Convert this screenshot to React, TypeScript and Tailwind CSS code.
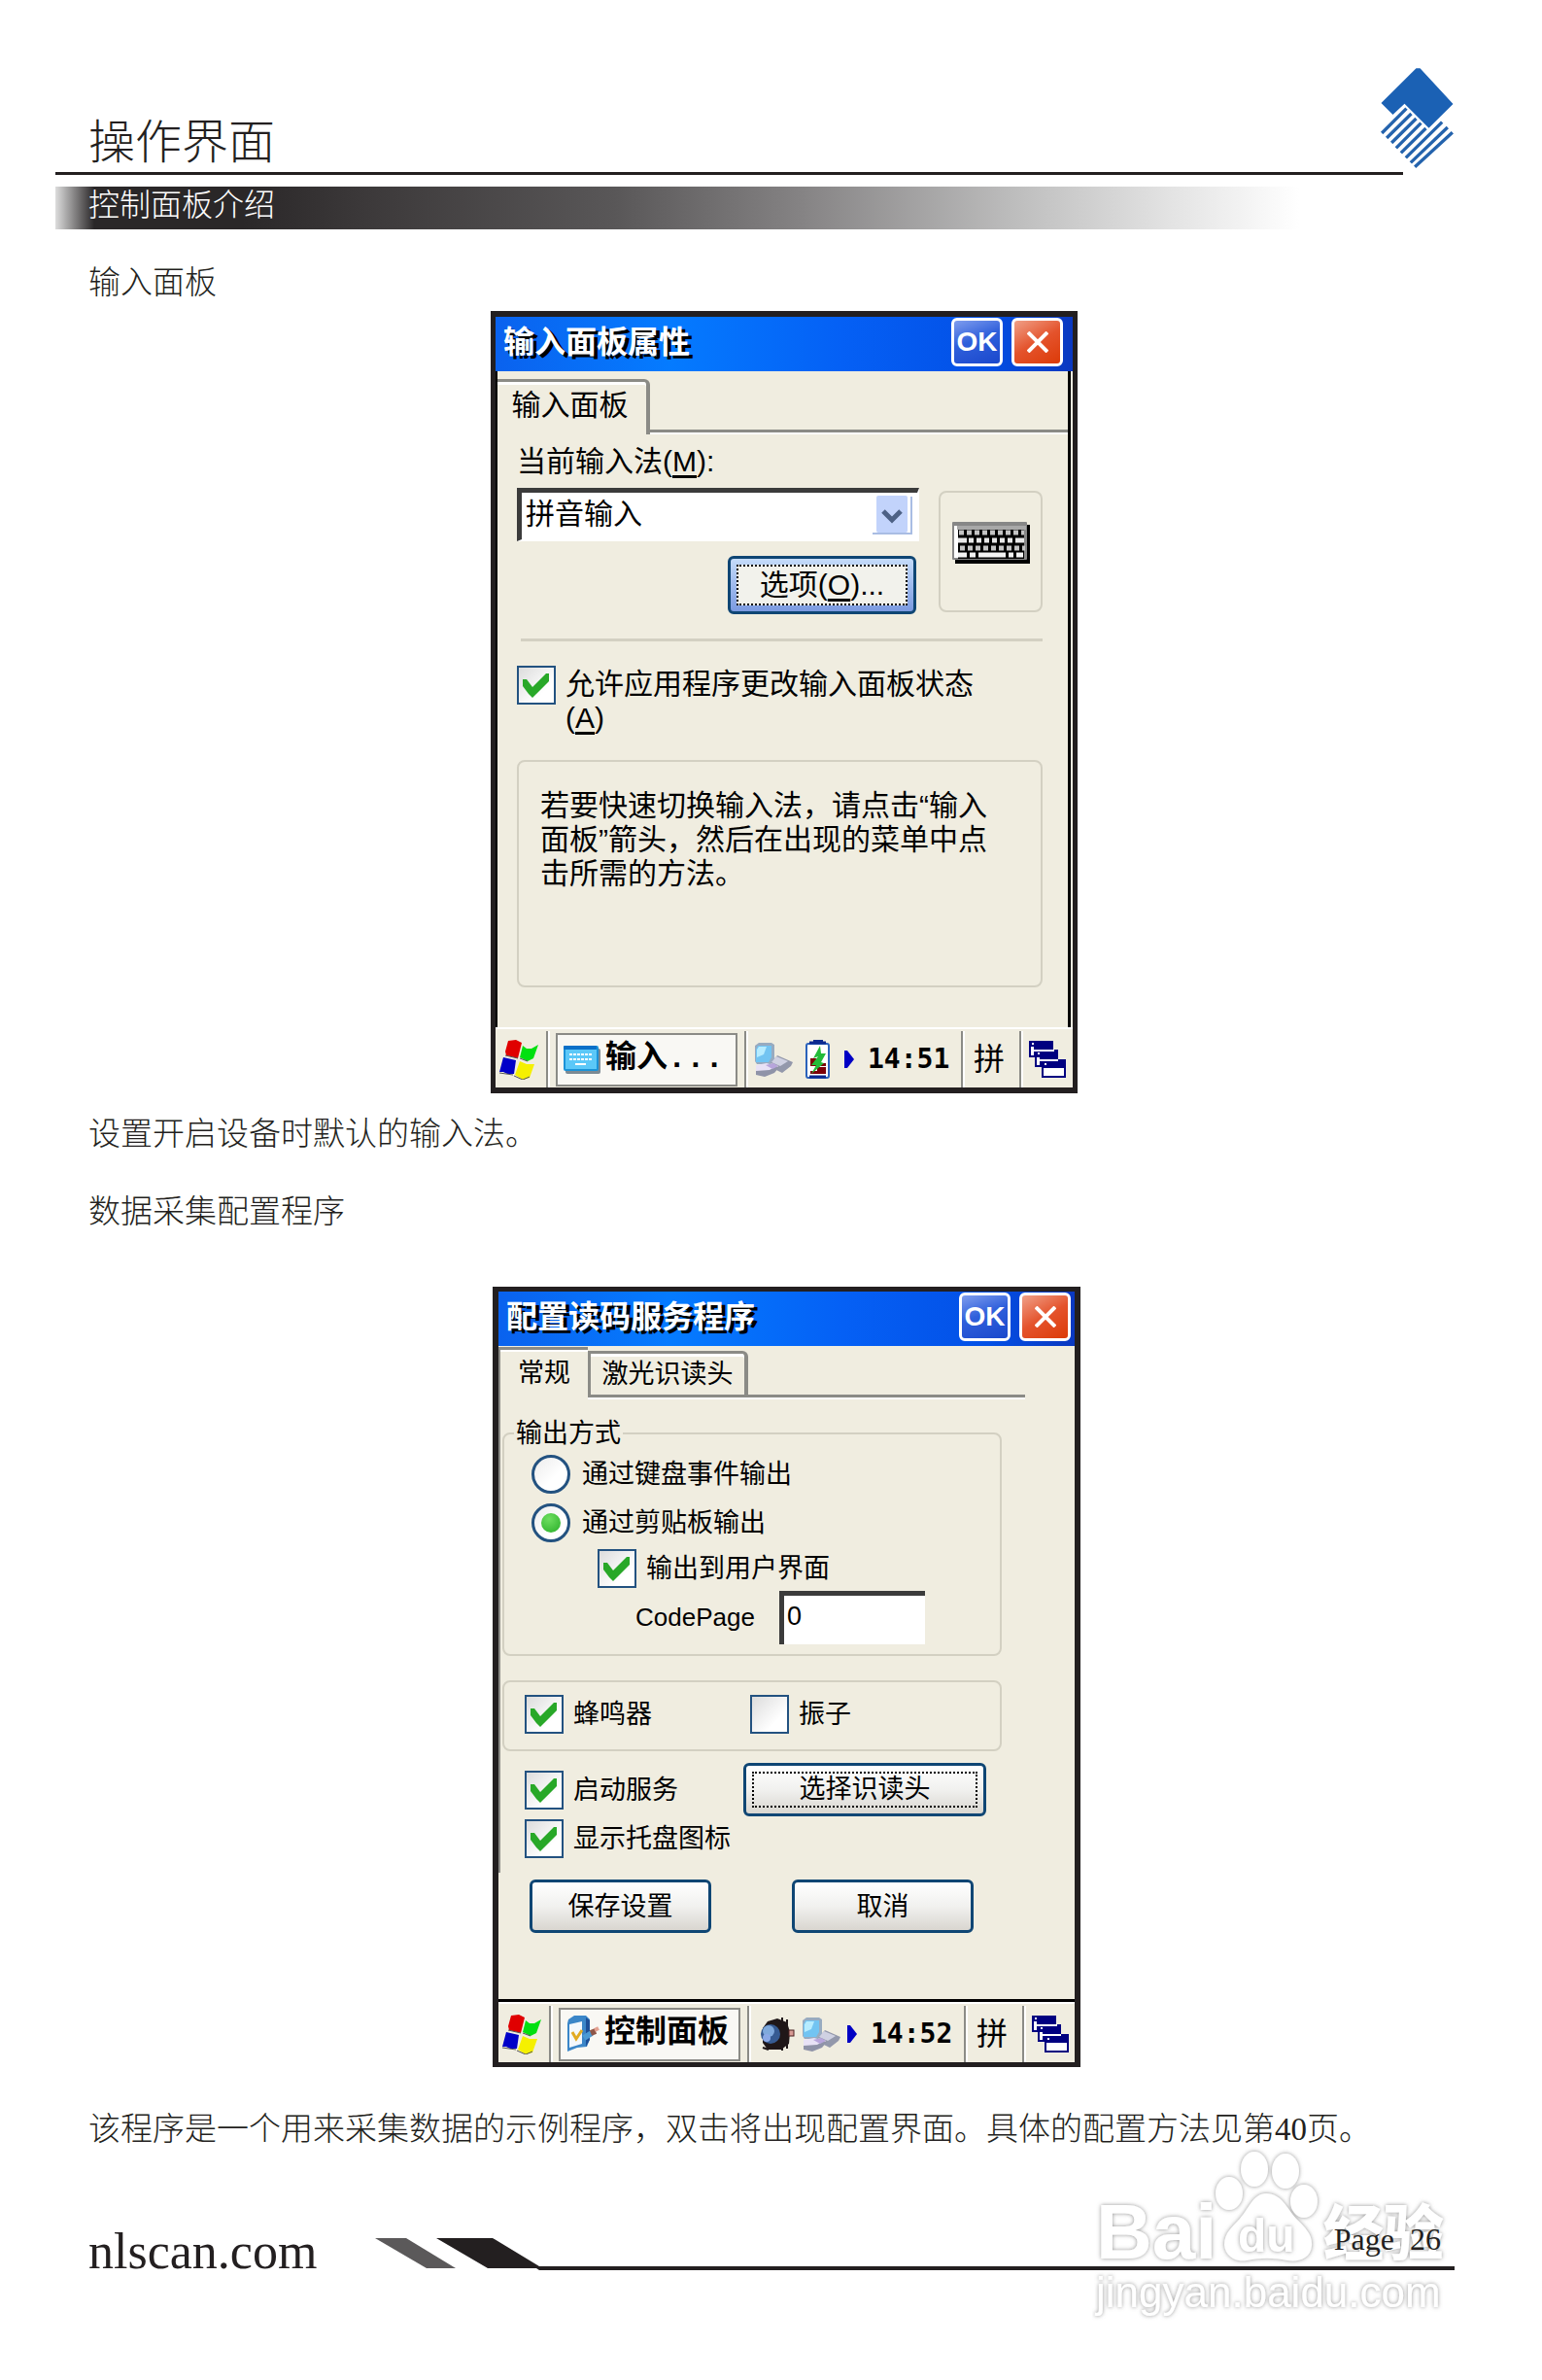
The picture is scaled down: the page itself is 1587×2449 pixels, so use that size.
import { useState } from 'react';
import type { ReactNode } from 'react';
import clsx from 'clsx';

const SERIF = "font-['Liberation_Serif','Noto_Sans_CJK_SC',serif]";
const SANS = "font-['Liberation_Sans','Noto_Sans_CJK_SC',sans-serif]";

function NewlandLogo() {
    return (
        <svg viewBox="662 86 230 312" className="h-[104px] w-[77px]" aria-hidden="true">
            <path d="M774 90h12l102 110-75 74-75-75-36 34-36-36z" fill="#1b61b4" />
            <g stroke="#2463ad" strokeWidth="10">
                <path d="M668 290l76-76M683 305l76-75M698 320l76-75M712 336l77-77M727 351l77-76M742 366l112-110M757 381l114-109M770 394l116-106" />
            </g>
        </svg>
    );
}

function WindowsFlag() {
    return (
        <svg viewBox="0 0 41 42" className="h-[42px] w-[41px] shrink-0" aria-hidden="true">
            <path d="M9 2l8-1 6 3-4 16-12-3-1-4z" fill="#e00000" />
            <path d="M24 7l4 3h5l7-4-5 14-6 3-8-4z" fill="#00e010" />
            <path d="M4 19l13 3-2 14H8l-4-2H0z" fill="#0000c8" />
            <path d="M21 23l7 3h8l-5 14-7 2-8-5z" fill="#f5f000" />
            <path d="M6 17l13 3M21 20l8 3M0 35l14 2M15 38l9 4 7-3" stroke="#555" fill="none" />
        </svg>
    );
}

function MiniKeyboardIcon() {
    return (
        <svg viewBox="0 0 38 29" className="h-[29px] w-[38px] shrink-0" aria-hidden="true">
            <rect x="2" y="3" width="36" height="26" rx="2" fill="#7c8a94" />
            <rect width="36" height="26" rx="2" fill="#1b93d8" />
            <rect x="2" y="4" width="32" height="20" fill="#5bc8f8" />
            <rect width="34" height="4" rx="1" fill="#0b70c8" />
            <path d="M6 9h24M6 14h24" stroke="#fff" strokeWidth="2" strokeDasharray="3 1" />
            <path d="M12 19h11" stroke="#fff" strokeWidth="2" />
        </svg>
    );
}

function ControlPanelIcon() {
    return (
        <svg viewBox="0 0 34 38" className="h-[38px] w-[34px] shrink-0" aria-hidden="true">
            <path d="M2 4l6-4h12l4 4v20l-3 8-10 1-10 4V8z" fill="#3b86c8" />
            <path d="M20 2l4 3v20l-4 7z" fill="#1c4f98" />
            <path d="M3 9l13-3v23L3 33z" fill="#f4f8fc" />
            <path d="M6 17l4 7 6-9" stroke="#e2ab22" strokeWidth="3" fill="none" />
            <path d="M18 23l8-5" stroke="#4b9ad4" strokeWidth="6" />
            <path d="M25 18l5-2" stroke="#8e5648" strokeWidth="6" />
            <path d="M29 15l4-2" stroke="#e3a090" strokeWidth="4" />
        </svg>
    );
}

function NetworkIcon() {
    return (
        <svg viewBox="0 0 40 36" className="h-9 w-10 shrink-0" aria-hidden="true">
            <path d="M1 4l4-3h13l3 2v16l-4 4H3l-2-3z" fill="#98abc0" />
            <path d="M4 4h14v12l-3 5H2V8z" fill="#72c4f2" />
            <path d="M5 5h8l-3 8-7 3V8z" fill="#b7ecff" />
            <path d="M24 14l16 7-2 4-9 7-6-3 2-4-8-3z" fill="#9398ab" />
            <path d="M23 15l12 5-8 5-9-4z" fill="#cfd1e2" />
            <path d="M2 25l11-2 13 3-5 6-10 4-9-2z" fill="#8f93a8" />
            <path d="M2 24l11-2 10 3-7 4-14 1z" fill="#e8e2f6" />
            <path d="M12 24l8-2 5 3-6 3z" fill="#b7a5dc" />
        </svg>
    );
}

function BatteryIcon() {
    return (
        <svg viewBox="0 0 25 40" className="h-10 w-[25px] shrink-0" aria-hidden="true">
            <rect x="8" width="10" height="4" fill="#0c2a90" />
            <rect x="1" y="4" width="23" height="35" rx="2" fill="#fff" stroke="#2b62bb" strokeWidth="2" />
            <path d="M4 3h17M4 38h17" stroke="#0c2a90" strokeWidth="3" />
            <path d="M5 19h6v5h10v3H5zM12 28h9v7H5v-3h7z" fill="#7c0008" />
            <path d="M15 6l1 8h5l-5 9 3 1-13 11 5-9H6l7-9-5 2z" fill="#22bb38" />
        </svg>
    );
}

function ScannerIcon() {
    return (
        <svg viewBox="0 0 36 36" className="h-9 w-9 shrink-0" aria-hidden="true">
            <path d="M8 5l10-3 10 4 3 10-1 12-8 6H8l-5-7V12z" fill="#1f1718" />
            <path d="M23 1v34M28 3v30M3 32l6 2" stroke="#1f1718" strokeWidth="2" />
            <circle cx="11" cy="18" r="10" fill="#365b92" />
            <circle cx="9" cy="15" r="6" fill="#7fa9dc" />
            <circle cx="7" cy="22" r="4" fill="#8aa8e6" />
            <rect x="30" y="14" width="5" height="6" fill="#d79a94" stroke="#4b2021" />
        </svg>
    );
}

function DesktopIcon() {
    return (
        <svg viewBox="0 0 38 38" className="ml-[6px] h-[38px] w-[38px] shrink-0" aria-hidden="true">
            <path d="M0 0h25v9h5v10h8v19H13V27H6V17H0z" fill="#000080" />
            <path d="M2 6h3v9H2zM5 9h21v2H5zM8 17h3v8H8zM11 19h19v2H11z" fill="#fff" />
            <rect x="15" y="28" width="21" height="8" fill="#fff" />
            <path d="M3 3h2M9 13h2M16 24h2" stroke="#fff" strokeWidth="2" />
        </svg>
    );
}

function KeyboardIcon() {
    return (
        <svg viewBox="0 0 80 43" className="h-[43px] w-20" aria-hidden="true">
            <rect x="3" y="3" width="77" height="40" fill="#000" />
            <rect width="77" height="39" rx="1" fill="#878787" />
            <path d="M2 4h74v3H6v30H2z" fill="#fff" />
            <rect x="6" y="7" width="68" height="31" fill="#000" />
            <rect x="5" y="4" width="71" height="4" fill="#a8a8a8" />
            <path d="M7 11h67M8 27h67" stroke="#c4c4c4" strokeWidth="5" strokeDasharray="5 3" />
            <path d="M6 19h68" stroke="#e8e8e8" strokeWidth="5" strokeDasharray="9 2 5 3 5 3 5 3 5 3 5 3 5 3" />
            <path d="M6 34h9M18 34h6M27 34h28M58 34h5M66 34h7" stroke="#f4f4f4" strokeWidth="5" />
        </svg>
    );
}

function Separator({ className }: { className?: string }) {
    return <span className={clsx('w-1 shrink-0 self-stretch border-r-2 border-l-2 border-r-white border-l-[#8b8b86]', className)} />;
}

function Taskbar({ icon, label, tray, time, wide }: { icon: ReactNode; label: string; tray: ReactNode; time: string; wide?: boolean }) {
    return (
        <footer className="flex h-[62px] items-center border-t-2 border-white bg-[#f0ede0] pt-[2px] pl-1 text-black">
            <WindowsFlag />
            <Separator className="ml-[7px]" />
            <button className="ml-[6px] flex h-[55px] w-[187px] shrink-0 items-center gap-[5px] overflow-hidden border-2 border-[#8b8b86] bg-[#f9f8f4] pl-[6px] font-['Liberation_Mono','Noto_Sans_CJK_SC',monospace] text-[32px] font-bold whitespace-nowrap">
                {icon}
                <span>{label}</span>
            </button>
            <Separator className="ml-[7px]" />
            <div className={clsx('flex w-[219px] shrink-0 items-center', wide ? 'pl-[9px]' : 'pl-[6px]')}>
                {tray}
                <svg viewBox="0 0 10 18" className="mr-[14px] h-[18px] w-[10px] shrink-0" aria-hidden="true"><path d="M0 0h3l7 9-7 9H0z" fill="#0000c4" /></svg>
                <time className="font-['DejaVu_Sans_Mono',monospace] text-[28px] leading-9 font-bold">{time}</time>
            </div>
            <Separator />
            <span className="w-[56px] pl-[9px] text-[32px] leading-10">拼</span>
            <Separator />
            <DesktopIcon />
        </footer>
    );
}

function TitleBar({ title, tight }: { title: string; tight?: boolean }) {
    return (
        <header className={clsx('flex h-14 items-start gap-[9px] bg-[linear-gradient(90deg,#0a62ee,#057bff_30%,#0560f5_60%,#0350e6_85%,#0a38c0)] pt-px pl-2', tight ? 'pr-1' : 'pr-[10px]')}>
            <h2 className="flex-1 text-[32px] leading-[50px] font-bold text-white [text-shadow:4px_3px_0_#000]">{title}</h2>
            <button className="h-[50px] w-[53px] rounded-md border-[3px] border-white bg-[linear-gradient(160deg,#7f9dee,#2f5fdb_45%,#1a48cc)] text-[28px] leading-10 font-bold text-white">OK</button>
            <button aria-label="关闭" className="flex h-[50px] w-[53px] items-center justify-center rounded-md border-[3px] border-white bg-[linear-gradient(150deg,#f0a088,#e4532c_50%,#dc3a08)]">
                <svg viewBox="0 0 22 22" className="h-[22px] w-[22px]" aria-hidden="true"><path d="M1 1l20 20M21 1L1 21" stroke="#fff" strokeWidth="4" /></svg>
            </button>
        </header>
    );
}

function CheckBox({ id, defaultChecked = false, children, className }: { id: string; defaultChecked?: boolean; children: ReactNode; className?: string }) {
    const [on, setOn] = useState(defaultChecked);
    return (
        <div className={clsx('flex items-start gap-[10px]', className)}>
            <span className="grid shrink-0">
                <input id={id} type="checkbox" checked={on} onChange={(e) => setOn(e.target.checked)} className="col-start-1 row-start-1 size-10 appearance-none border-2 border-[#235280] bg-[linear-gradient(135deg,#dcdcdc,#fff_70%)]" />
                {on && (
                    <svg viewBox="0 0 40 40" className="pointer-events-none col-start-1 row-start-1 size-10" aria-hidden="true">
                        <path d="M6 14h4l6 8L30 8h3v8L20 29l-4 4-4-4-6-8z" fill="#28a828" />
                    </svg>
                )}
            </span>
            <label htmlFor={id} className="leading-10">{children}</label>
        </div>
    );
}

function RadioRow({ id, checked, onPick, children }: { id: string; checked: boolean; onPick: () => void; children: ReactNode }) {
    return (
        <div className="flex items-center gap-3">
            <span className="grid shrink-0">
                <input id={id} type="radio" name="output" checked={checked} onChange={onPick} className="col-start-1 row-start-1 size-10 appearance-none rounded-full border-[3px] border-[#235280] bg-[linear-gradient(135deg,#ececec,#fff_60%)]" />
                {checked && <span className="pointer-events-none col-start-1 row-start-1 size-5 place-self-center rounded-full bg-[radial-gradient(circle_at_40%_30%,#6ede60,#28ae28)]" />}
            </span>
            <label htmlFor={id} className="leading-10">{children}</label>
        </div>
    );
}

const PLAIN_BUTTON = 'h-[55px] rounded-md border-[3px] border-[#0f4674] bg-linear-to-b from-white via-[#f1f1ef] to-[#d9d6d0]';

function InputPanelWindow() {
    return (
        <section className={clsx('w-[604px] border-x-[5px] border-y-[6px] border-[#231f20] bg-[#f0ede0] text-black', SANS)}>
            <TitleBar title="输入面板属性" />
            <div className="mr-[2px] border-r-[3px] border-l-2 border-black pt-2 pb-[41px] text-[30px]">
                <div className="flex items-end">
                    <button className="h-[57px] w-[157px] rounded-tr-md border-t-[3px] border-r-[4px] border-[#8b8b86] pr-[4px] pb-[6px] leading-[46px] shadow-[inset_0_3px_0_#fff]">输入面板</button>
                    <span className="h-[5px] flex-1 border-t-[3px] border-b-2 border-t-[#8b8b86] border-b-white" />
                </div>
                <div className="pr-[26px] pl-5">
                    <label htmlFor="ime" className="mt-[10px] block leading-9">当前输入法(<u className="underline-offset-4">M</u>):</label>
                    <div className="mt-[9px] flex justify-between">
                        <div className="flex w-[414px] flex-col">
                            <div className="relative">
                                <select id="ime" className="block h-[55px] w-full appearance-none border-t-[5px] border-r-2 border-b-2 border-l-[5px] border-t-[#3b3b3b] border-r-white border-b-white border-l-[#3b3b3b] bg-white pb-1 pl-1 leading-[44px]">
                                    <option>拼音输入</option>
                                </select>
                                <svg viewBox="0 0 44 44" className="pointer-events-none absolute top-[7px] right-[5px] size-11" aria-hidden="true">
                                    <path d="M1 40h40V2" fill="none" stroke="#a9bde3" strokeWidth="2" />
                                    <rect x="5" y="1" width="32" height="38" rx="2" fill="#c2d3fb" />
                                    <path d="M12 17l9 9 9-9" fill="none" stroke="#4d6185" strokeWidth="5" />
                                </svg>
                            </div>
                            <button className="mt-[15px] mr-[3px] h-[60px] w-[194px] self-end rounded-md border-[3px] border-[#0f4674] bg-linear-to-b from-[#c5dcfa] to-[#7b9ae0] p-[6px]">
                                <span className="block border-2 border-dotted border-black bg-[#f2f2ec] leading-[38px]">选项(<u className="underline-offset-4">O</u>)...</span>
                            </button>
                        </div>
                        <div className="mt-[3px] flex h-[125px] w-[107px] items-center justify-center rounded-lg border-2 border-[#d3d0c2] pb-[18px]">
                            <KeyboardIcon />
                        </div>
                    </div>
                    <hr className="mt-[25px] ml-1 border-t-[3px] border-[#d3d0c2]" />
                    <CheckBox id="allow" defaultChecked className="mt-[25px]">
                        <span className="block pt-px leading-[35px]">允许应用程序更改输入面板状态<br />(<u className="underline-offset-4">A</u>)</span>
                    </CheckBox>
                    <p className="mt-[26px] min-h-[234px] rounded-lg border-2 border-[#d3d0c2] pt-[27px] pl-[22px] leading-[35px]">
                        若要快速切换输入法，请点击“输入<br />面板”箭头，然后在出现的菜单中点<br />击所需的方法。
                    </p>
                </div>
            </div>
            <Taskbar
                icon={<MiniKeyboardIcon />}
                label="输入..."
                time="14:51"
                tray={<><NetworkIcon /><span className="mr-[15px] ml-[13px]"><BatteryIcon /></span></>}
            />
        </section>
    );
}

function ScanServiceWindow() {
    const [output, setOutput] = useState('clipboard');
    const [codePage, setCodePage] = useState('0');

    return (
        <section className={clsx('w-[605px] border-x-[6px] border-y-[5px] border-[#231f20] bg-[#f0ede0] text-black', SANS)}>
            <TitleBar title="配置读码服务程序" tight />
            <div className="border-b-[3px] border-black pt-px pb-[68px] text-[27px]">
                <div className="border-l-2 border-[#8b8b86] pb-[15px]">
                    <div className="flex">
                        <button className="h-[54px] w-[90px] border-t-[3px] border-[#8b8b86] pb-1 leading-[42px] shadow-[inset_0_2px_0_#fff]">常规</button>
                        <div className="w-[450px] pt-1">
                            <button className="block h-[45px] w-[165px] rounded-tr-md border-t-[3px] border-r-4 border-l-[3px] border-[#8b8b86] leading-[42px] shadow-[inset_0_3px_0_#fff]">激光识读头</button>
                            <span className="block h-[5px] border-t-[3px] border-b-2 border-t-[#8b8b86] border-b-white" />
                        </div>
                    </div>
                    <fieldset className="mt-[17px] ml-[2px] w-[514px] rounded-lg border-2 border-[#d3d0c2] pb-[10px]">
                        <legend className="ml-[10px] px-[2px] leading-9">输出方式</legend>
                        <div className="flex flex-col gap-[10px] pt-1 pl-7">
                            <RadioRow id="by-key" checked={output === 'key'} onPick={() => setOutput('key')}>通过键盘事件输出</RadioRow>
                            <RadioRow id="by-clipboard" checked={output === 'clipboard'} onPick={() => setOutput('clipboard')}>通过剪贴板输出</RadioRow>
                        </div>
                        <CheckBox id="to-ui" defaultChecked className="mt-[7px] pl-24">输出到用户界面</CheckBox>
                        <div className="mt-[3px] flex pl-[135px]">
                            <label htmlFor="codepage" className="w-[148px] text-[26px] leading-[54px]">CodePage</label>
                            <input id="codepage" value={codePage} onChange={(e) => setCodePage(e.target.value)} className="h-[55px] w-[150px] border-t-[5px] border-l-[5px] border-[#3b3b3b] bg-white pb-2 pl-[3px]" />
                        </div>
                    </fieldset>
                    <div className="mt-[25px] ml-[2px] grid w-[514px] grid-cols-[232px_1fr] rounded-lg border-2 border-[#d3d0c2] pt-[13px] pb-4 pl-[21px]">
                        <CheckBox id="beeper" defaultChecked>蜂鸣器</CheckBox>
                        <CheckBox id="vibrate">振子</CheckBox>
                    </div>
                    <div className="mt-3 flex items-start pl-[25px]">
                        <div className="flex w-[225px] flex-col gap-[10px] pt-2">
                            <CheckBox id="start" defaultChecked>启动服务</CheckBox>
                            <CheckBox id="trayicon" defaultChecked>显示托盘图标</CheckBox>
                        </div>
                        <button className={clsx(PLAIN_BUTTON, 'w-[250px] p-[6px]')}>
                            <span className="block border-2 border-dotted border-black leading-[33px]">选择识读头</span>
                        </button>
                    </div>
                </div>
                <div className="mt-[7px] flex gap-[83px] pl-8">
                    <button className={clsx(PLAIN_BUTTON, 'w-[187px]')}>保存设置</button>
                    <button className={clsx(PLAIN_BUTTON, 'w-[187px]')}>取消</button>
                </div>
            </div>
            <Taskbar
                icon={<ControlPanelIcon />}
                label="控制面板"
                time="14:52"
                wide
                tray={<><ScannerIcon /><span className="mr-[7px] ml-[7px]"><NetworkIcon /></span></>}
            />
        </section>
    );
}

function Watermark() {
    return (
        <svg viewBox="0 0 372 180" className="pointer-events-none absolute -top-[77px] right-[91px] h-[180px] w-[372px]" aria-hidden="true">
            <defs>
                <filter id="soft" x="-5%" y="-5%" width="110%" height="110%">
                    <feDropShadow dx="0" dy="0" stdDeviation="2" floodColor="#777" floodOpacity="0.8" />
                </filter>
            </defs>
            <g filter="url(#soft)" fill="#fff" fontFamily="'Liberation Sans','Noto Sans CJK SC',sans-serif">
                <text x="4" y="115" fontSize="80" fontWeight="700">Bai</text>
                <text x="238" y="112" fontSize="62" fontWeight="900">经验</text>
                <ellipse cx="141" cy="48" rx="14" ry="17" />
                <ellipse cx="167" cy="23" rx="14" ry="18" />
                <ellipse cx="199" cy="25" rx="14" ry="18" />
                <ellipse cx="218" cy="56" rx="14" ry="17" />
                <path d="M179 48c16 0 22 16 31 26 9 9 17 16 16 28-1 13-14 17-25 15-14-3-28-3-42 0-12 2-22-5-23-16 0-13 9-19 16-27 9-10 14-26 27-26z" />
                <text x="4" y="165" fontSize="44">jingyan.baidu.com</text>
            </g>
            <g filter="url(#soft)" fill="#fff" fontFamily="'Liberation Sans',sans-serif">
                <text x="150" y="108" fontSize="48" fontWeight="700">du</text>
            </g>
        </svg>
    );
}

export default function App() {
    return (
        <main className={clsx('min-h-screen overflow-hidden bg-white text-[33px] leading-10 font-light text-[#231f20]', SERIF)}>
            <header>
                <div className="flex h-[177px] items-end justify-between pr-[90px] pl-[91px]">
                    <h1 className="text-[48px] leading-[60px] font-light">操作界面</h1>
                    <span className="pb-1"><NewlandLogo /></span>
                </div>
                <div className="mr-[143px] ml-[57px] h-[3px] bg-[#231f20]" />
                <div className="mt-3 mr-[250px] ml-[57px] h-11 bg-[linear-gradient(90deg,#ddd,#2a2728_40px,#2a2728_15%,#3c393a_25%,#595758_45%,#858384_60%,#c0c0c0_78%,#e4e4e4_90%,#fff)] pl-[34px] text-[32px] leading-[38px] text-white">控制面板介绍</div>
            </header>

            <p className="mt-[35px] pl-[91px]">输入面板</p>
            <div className="mt-[9px] flex justify-center pl-[27px] font-normal"><InputPanelWindow /></div>
            <p className="mt-[22px] pl-[91px]">设置开启设备时默认的输入法。</p>
            <p className="mt-10 pl-[91px]">数据采集配置程序</p>
            <div className="mt-[57px] flex justify-center pl-8 font-normal"><ScanServiceWindow /></div>
            <p className="mt-[44px] pl-[91px]">该程序是一个用来采集数据的示例程序，双击将出现配置界面。具体的配置方法见第40页。</p>

            <footer className="relative mt-[75px] flex items-start pr-[90px] pl-[91px] font-normal">
                <Watermark />
                <a href="#" className="text-[52px] leading-[62px]">nlscan.com</a>
                <svg viewBox="0 0 171 33" className="mt-[17px] ml-[60px] h-[33px] w-[171px] shrink-0" aria-hidden="true">
                    <path d="M0 0h32l51 31H53z" fill="#5b595a" />
                    <path d="M63 0h58l48 29h2v4h-2l-3-2h-50z" fill="#231f20" />
                </svg>
                <div className="relative flex-1">
                    <p className="pr-[14px] text-right text-[32px] leading-9 whitespace-pre">Page  26</p>
                    <div className="mt-[10px] h-1 bg-[#231f20]" />
                </div>
            </footer>
        </main>
    );
}
